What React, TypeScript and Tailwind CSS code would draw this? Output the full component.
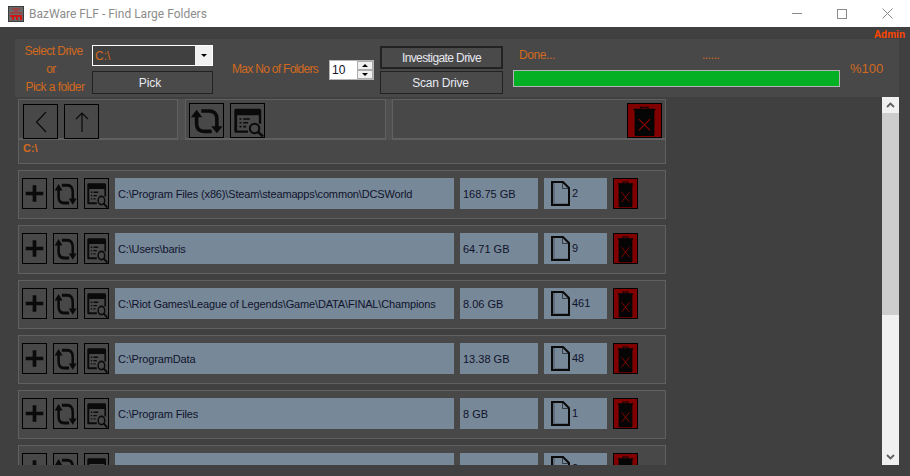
const ORANGE = 'text-[#d2691e]'

const FOLDERS = [
  { path: 'C:\\Program Files (x86)\\Steam\\steamapps\\common\\DCSWorld', size: '168.75 GB', files: '2' },
  { path: 'C:\\Users\\baris', size: '64.71 GB', files: '9' },
  { path: 'C:\\Riot Games\\League of Legends\\Game\\DATA\\FINAL\\Champions', size: '8.06 GB', files: '461' },
  { path: 'C:\\ProgramData', size: '13.38 GB', files: '48' },
  { path: 'C:\\Program Files', size: '8 GB', files: '1' },
  { path: 'C:\\Users\\baris', size: '6.63 GB', files: '2' },
]

function RefreshIcon({ className }: { className: string }) {
  return (
    <svg viewBox="0 0 35 35" preserveAspectRatio="none" className={className}>
      <path d="M12 7.5H20Q28.5 7.5 28.5 16V25" fill="none" stroke="#0a0a0a" strokeWidth="3.8" />
      <path d="M7 12V21Q7 29 15 29H23" fill="none" stroke="#0a0a0a" strokeWidth="3.8" />
      <path d="M22.5 23.5H34.5L28.5 31Z" fill="#0a0a0a" />
      <path d="M1 14H13L7 6Z" fill="#0a0a0a" />
    </svg>
  )
}

function SearchWindowIcon({ className }: { className: string }) {
  return (
    <svg viewBox="0 0 35 35" preserveAspectRatio="none" className={className}>
      <path d="M5 5H30Q32 5 32 7V21H29.5V12H6.5V28H18V30.5H5Q3.5 30.5 3.5 29V7Q3.5 5 5 5Z" fill="#0a0a0a" />
      <path d="M9 16H11M13 16H20M9 20H11M13 20H18M9 24H11M13 24H16" stroke="#0a0a0a" strokeWidth="1.6" fill="none" />
      <circle cx="25" cy="26" r="5" fill="none" stroke="#0a0a0a" strokeWidth="2.2" />
      <path d="M28.5 29.5L34 34.5" stroke="#0a0a0a" strokeWidth="2.6" />
    </svg>
  )
}

function TrashIcon({ className }: { className: string }) {
  return (
    <svg viewBox="0 0 35 35" preserveAspectRatio="none" className={className}>
      <path d="M6 5H13V3H22V5H29V7H28V33Q28 34 27 34H8Q7 34 7 33V7H6Z" fill="#050505" />
      <path d="M14.5 4.5H20.5" stroke="#800000" strokeWidth="1" />
      <path d="M11.5 16L23.5 28M23.5 16L11.5 28" stroke="#900000" strokeWidth="1.2" fill="none" />
    </svg>
  )
}

function PlusIcon() {
  return (
    <svg viewBox="0 0 25 31" className="h-full w-full">
      <path d="M12.5 6.5V24.5M3 15.5H22" stroke="#0a0a0a" strokeWidth="4" fill="none" />
    </svg>
  )
}

function DocIcon() {
  return (
    <svg viewBox="0 0 19 25" className="h-[25px] w-[19px] shrink-0">
      <path d="M2 2H4V22H17.5V23H2Z" fill="#5f6d7c" />
      <path d="M1 1H12L18 7V24H1Z" fill="none" stroke="#0a0a0a" strokeWidth="2" />
      <path d="M11.5 1V7.5H18" fill="none" stroke="#0a0a0a" strokeWidth="0.6" />
    </svg>
  )
}

function Logo() {
  return (
    <svg viewBox="0 0 16 16" className="h-4 w-4">
      <rect width="16" height="16" fill="#3c3c3c" />
      <rect x="1" y="1" width="14" height="14" fill="#6a6a6a" />
      <path d="M4 3H12M6 5H10M2 7H14" stroke="#c42020" strokeWidth="1" />
      <path d="M2 9H14V14H12V11H10V14H8V11H6V14H4V11H2Z" fill="#d01818" />
    </svg>
  )
}

function FolderRow({ path, size, files }: { path: string; size: string; files: string }) {
  return (
    <div className="flex h-[49px] w-[648px] shrink-0 items-start gap-[6px] border border-[#606060] bg-[#484848] pt-[7px] pl-[3px]">
      <div className="h-[31px] w-[25px] shrink-0 border border-black"><PlusIcon /></div>
      <div className="h-[31px] w-[25px] shrink-0 border border-black"><RefreshIcon className="h-full w-full" /></div>
      <div className="h-[31px] w-[25px] shrink-0 border border-black"><SearchWindowIcon className="h-full w-full" /></div>
      <div className="flex h-[31px] w-[339px] shrink-0 items-center bg-[#778899] pt-[1px] pl-[3px] tracking-[-0.15px] text-[#10132b]">{path}</div>
      <div className="flex h-[31px] w-[78px] shrink-0 items-center bg-[#778899] pt-[1px] pl-[3px] text-[#10132b]">{size}</div>
      <div className="flex h-[31px] w-[63px] shrink-0 items-center bg-[#778899] pl-[7px] text-[#10132b]">
        <DocIcon />
        <span className="ml-[2px]">{files}</span>
      </div>
      <div className="h-[31px] w-[25px] shrink-0 border border-black bg-[#800000]"><TrashIcon className="h-full w-full" /></div>
    </div>
  )
}

export default function App() {
  return (
    <div className="flex h-[476px] w-[910px] flex-col overflow-hidden bg-[#404040] font-['Liberation_Sans',sans-serif] text-[11px]">
      {/* Title bar */}
      <div className="flex h-[27px] shrink-0 items-center bg-white pl-[8px]">
        <Logo />
        <span className="ml-[5px] font-['Roboto',sans-serif] text-[12px] text-[#8c8c8c]">BazWare FLF - Find Large Folders</span>
        <div className="ml-auto flex h-full items-center">
          <div className="h-px w-[10px] bg-[#8a8a8a]" />
          <div className="ml-[35px] h-[10px] w-[10px] border border-[#8a8a8a]" />
          <svg viewBox="0 0 11 11" className="mr-[17px] ml-[35px] h-[11px] w-[11px]">
            <path d="M.5.5L10.5 10.5M10.5.5L.5 10.5" stroke="#8a8a8a" strokeWidth="1" />
          </svg>
        </div>
      </div>

      <div className="flex h-[12px] shrink-0 items-center justify-end pt-[3px] pr-[5px] text-[10px] font-bold text-[#ff4500]">Admin</div>

      {/* Drive controls */}
      <div className="ml-[15px] flex h-[58px] w-[884px] shrink-0 bg-[#484848]">
        <div className={`flex w-[77px] flex-col items-center justify-center gap-[4px] pt-[2px] pl-[3px] text-[12px] leading-[14px] tracking-[-0.55px] ${ORANGE}`}>
          <span className="mr-[3px]">Select Drive</span>
          <span className="mr-[8px]">or</span>
          <span>Pick a folder</span>
        </div>
        <div className="flex w-[121px] flex-col pt-[6px]">
          <div className="flex h-[21px] items-center justify-between border border-white bg-[#404040] text-[12px] text-[#d2691e]">
            <span className="pl-[2px]">C:\</span>
            <span className="flex h-full w-[17px] items-center justify-center bg-[#f0f0f0]">
              <span className="h-0 w-0 border-x-[3px] border-t-[3px] border-x-transparent border-t-black" />
            </span>
          </div>
          <button className="mt-[5px] h-[23px] border border-[#222] bg-[#4a4a4a] pr-[5px] text-[12px] text-[#e6e8f0]">Pick</button>
        </div>
        <span className={`ml-[19px] w-[86px] self-center pt-[2px] text-[12px] whitespace-nowrap tracking-[-0.7px] ${ORANGE}`}>Max No of Folders</span>
        <div className="mt-[21px] ml-[11px] flex h-[20px] w-[45px] items-center justify-between border border-[#b5b5b5] bg-white pl-[2px] text-[12px] text-[#10132b]">
          <span>10</span>
          <span className="flex h-full w-[16px] flex-col bg-[#f0f0f0]">
            <span className="flex flex-1 items-center justify-center border border-[#adadad]">
              <span className="h-0 w-0 border-x-[3px] border-b-[3px] border-x-transparent border-b-black" />
            </span>
            <span className="flex flex-1 items-center justify-center border border-[#adadad]">
              <span className="h-0 w-0 border-x-[3px] border-t-[3px] border-x-transparent border-t-black" />
            </span>
          </span>
        </div>
        <div className="ml-[6px] flex w-[123px] flex-col pt-[7px]">
          <button className="h-[23px] border-2 border-[#222] bg-[#4a4a4a] text-[12px] tracking-[-0.6px] text-[#e6e8f0]">Investigate Drive</button>
          <button className="mt-[2px] h-[23px] border border-[#222] bg-[#4a4a4a] pr-[2px] text-[12px] tracking-[-0.2px] text-[#e6e8f0]">Scan Drive</button>
        </div>
        <div className="ml-[10px] flex w-[327px] flex-col">
          <div className={`flex h-[31px] items-center text-[12px] tracking-[-0.4px] ${ORANGE}`}>
            <span className="pl-[6px]">Done...</span>
            <span className="ml-[147px]">......</span>
          </div>
          <div className="h-[17px] border border-[#b4b4b4] bg-[#06b025]" />
        </div>
        <span className={`ml-[10px] self-center pt-[2px] text-[13px] ${ORANGE}`}>%100</span>
      </div>

      <div className="flex h-[368px] shrink-0">
        <div className="flex w-[882px] flex-col gap-[6px] overflow-hidden pt-[2px] pl-[18px]">
          {/* Navigation */}
          <div className="flex w-[648px] shrink-0 flex-col">
            <div className="flex h-[41px] bg-[#505050]">
              <div className="flex w-[160px] items-start gap-[6px] border border-b-2 border-[#606060] bg-[#484848] pt-[4px] pl-[4px]">
                <button className="flex h-[35px] w-[35px] items-center justify-center border border-black">
                  <svg viewBox="0 0 12 22" className="h-[22px] w-[12px]"><path d="M11 1L1.5 11L11 21" fill="none" stroke="#0a0a0a" strokeWidth="1.2" /></svg>
                </button>
                <button className="flex h-[35px] w-[35px] items-center justify-center border border-black">
                  <svg viewBox="0 0 14 20" className="h-[20px] w-[14px]"><path d="M7 20V1M1 7L7 1L13 7" fill="none" stroke="#0a0a0a" strokeWidth="1.2" /></svg>
                </button>
              </div>
              <div className="ml-[7px] flex w-[201px] items-start gap-[6px] border border-b-2 border-[#606060] bg-[#484848] pt-[3px] pl-[3px]">
                <div className="h-[35px] w-[35px] border border-black"><RefreshIcon className="h-full w-full" /></div>
                <div className="h-[35px] w-[35px] border border-black"><SearchWindowIcon className="h-full w-full" /></div>
              </div>
              <div className="ml-[6px] flex w-[274px] items-start justify-end border border-b-2 border-[#606060] bg-[#484848] pt-[3px] pr-[3px]">
                <div className="h-[35px] w-[35px] border border-black bg-[#800000]"><TrashIcon className="h-full w-full" /></div>
              </div>
            </div>
            <div className="h-[24px] border border-t-0 border-[#606060] bg-[#484848] pl-[4px] text-[11px] leading-[17px] font-bold text-[#d2691e]">C:\</div>
          </div>

          {FOLDERS.map((folder, i) => (
            <FolderRow key={i} {...folder} />
          ))}
        </div>

        {/* Scrollbar */}
        <div className="flex w-[17px] shrink-0 flex-col bg-[#f0f0f0]">
          <div className="flex h-[16px] shrink-0 items-center justify-center">
            <svg viewBox="0 0 9 6" className="h-[6px] w-[9px]"><path d="M1 5L4.5 1.5L8 5" fill="none" stroke="#606060" strokeWidth="1.8" /></svg>
          </div>
          <div className="h-[202px] shrink-0 bg-[#cdcdcd]" />
          <div className="mt-auto flex h-[16px] shrink-0 items-center justify-center">
            <svg viewBox="0 0 9 6" className="h-[6px] w-[9px]"><path d="M1 1L4.5 4.5L8 1" fill="none" stroke="#606060" strokeWidth="1.8" /></svg>
          </div>
        </div>
      </div>
    </div>
  )
}
